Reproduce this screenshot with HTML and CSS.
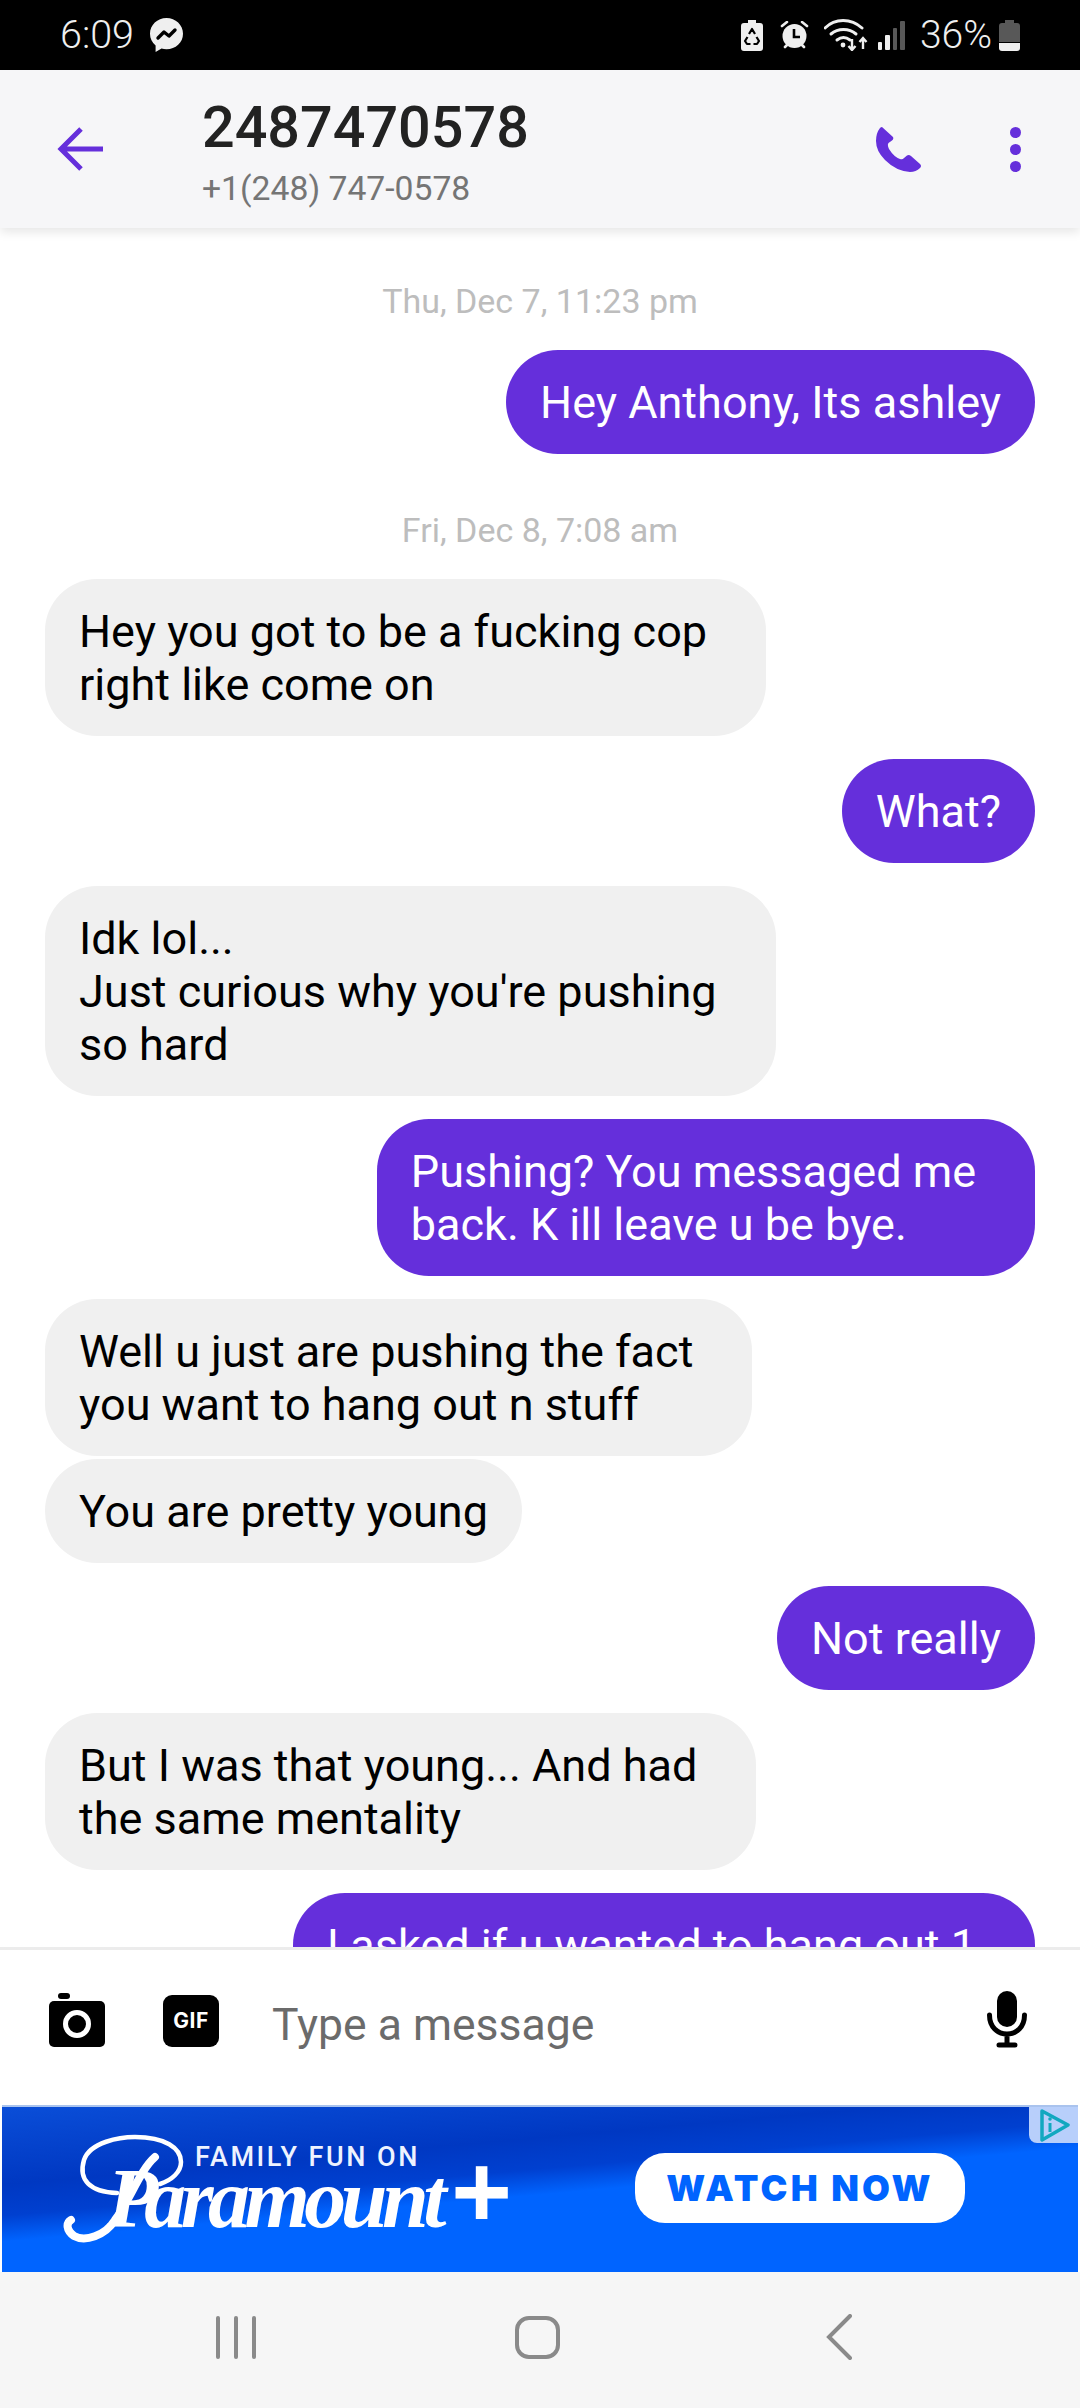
FILE: index.html
```html
<!DOCTYPE html>
<html lang="en">
<head>
<meta charset="utf-8">
<title>2487470578</title>
<link rel="stylesheet" href="styles.css">
</head>
<body>
<div class="phone">
  <div class="status">
    <div class="status-left">
      <span class="time">6:09</span>
      <svg class="ic-msgr" viewBox="0 0 33 34"><path fill="#efefef" d="M16.5 0C7.4 0 0 7 0 15.800c0 4.800 2.100 8.900 5.600 11.700V34l5.900-3.400c1.600.5 3.200.7 5 .7C25.600 31.300 33 24.600 33 15.800S25.600 0 16.500 0z"/><path fill="none" stroke="#000" stroke-width="3.400" stroke-linejoin="round" stroke-linecap="round" d="M8 20l6-6 5 4 6-6"/></svg>
    </div>
    <div class="status-right">
      <svg class="ic-rec" viewBox="0 0 22 31"><path fill="#efefef" d="M7 0h8v3h4a3 3 0 0 1 3 3v22a3 3 0 0 1-3 3H3a3 3 0 0 1-3-3V6a3 3 0 0 1 3-3h4z"/><path fill="none" stroke="#000" stroke-width="2.200" stroke-linejoin="round" d="M8 14l3-5 3 5M6.500 17l-2.500 4 2 3h3.500M15.500 17l2.500 4-2 3h-3.500"/></svg>
      <svg class="ic-alarm" viewBox="0 0 29 28"><circle cx="14.500" cy="15" r="12" fill="#efefef"/><path stroke="#efefef" stroke-width="2.600" stroke-linecap="round" fill="none" d="M2 5l5-4M27 5l-5-4M5 26l2-2M24 26l-2-2"/><path fill="none" stroke="#000" stroke-width="2.600" d="M14 8v8h6"/></svg>
      <svg class="ic-wifi" viewBox="0 0 44 32"><g fill="none" stroke="#efefef" stroke-width="3" stroke-linecap="round"><path d="M1 9c10-10 26-10 37 0"/><path d="M7 15c7-6 18-6 25 0"/><path d="M13 21c4-3 9-3 13 0"/></g><circle cx="19" cy="26" r="2.400" fill="#efefef"/><path fill="none" stroke="#efefef" stroke-width="2.400" d="M28 20v10M24.500 27l3.500 4 3.500-4M39 30V19M35.500 23l3.500-4 3.500 4"/></svg>
      <div class="signal"><i class="s1"></i><i class="s2"></i><i class="s3"></i><i class="s4"></i></div>
      <span class="pct">36%</span>
      <svg class="ic-batt" viewBox="0 0 21 31"><path fill="#585858" d="M6 0h9v3h3a3 3 0 0 1 3 3v16H0V6a3 3 0 0 1 3-3h3z"/><path fill="#efefef" d="M0 23h21v5a3 3 0 0 1-3 3H3a3 3 0 0 1-3-3z"/></svg>
    </div>
  </div>

  <header class="topbar">
    <svg class="ic-back" viewBox="0 0 46 44"><path fill="none" stroke="#652fdb" stroke-width="5" d="M46 22H5M24 2L4 22l20 20"/></svg>
    <div class="contact">
      <div class="contact-name">2487470578</div>
      <div class="contact-num">+1(248) 747-0578</div>
    </div>
    <svg class="ic-call" viewBox="0 0 45 45"><path fill="#652fdb" d="M6 0L17 10Q18 12 16 13.500L12.500 16Q11 18 13 22Q18 30 24 32Q26.500 33 28 31L31 28.500Q33 27.500 35 29L44 37Q46 39 44 41Q40 45 34 45Q20 44 9 33Q0 24 0 14Q0 6 4 1Q5 0 6 0Z"/></svg>
    <div class="more"><i></i><i></i><i></i></div>
  </header>

  <main class="thread">
    <div class="stamp stamp-first">Thu, Dec 7, 11:23 pm</div>
    <div class="bubble out">Hey Anthony, Its ashley</div>
    <div class="stamp">Fri, Dec 8, 7:08 am</div>
    <div class="bubble in multi">Hey you got to be a fucking cop<br>right like come on</div>
    <div class="bubble out">What?</div>
    <div class="bubble in multi">Idk lol...<br>Just curious why you're pushing<br>so hard</div>
    <div class="bubble out multi">Pushing? You messaged me<br>back. K ill leave u be bye.</div>
    <div class="bubble in multi">Well u just are pushing the fact<br>you want to hang out n stuff</div>
    <div class="bubble in tight">You are pretty young</div>
    <div class="bubble out">Not really</div>
    <div class="bubble in multi">But I was that young... And had<br>the same mentality</div>
    <div class="bubble out multi">I asked if u wanted to hang out 1<br>time</div>
  </main>

  <div class="composer">
    <svg class="ic-cam" viewBox="0 0 56 54"><rect x="9" y="0" width="12" height="6" rx="3" fill="#000"/><rect x="0" y="8" width="56" height="46" rx="5" fill="#000"/><circle cx="28" cy="31" r="11.500" fill="none" stroke="#fff" stroke-width="5"/></svg>
    <div class="gif">GIF</div>
    <div class="placeholder">Type a message</div>
    <svg class="ic-mic" viewBox="0 0 40 57"><rect x="10" y="0" width="20" height="36" rx="10" fill="#000"/><path fill="none" stroke="#000" stroke-width="5" stroke-linecap="round" d="M2.500 24c0 12 8 19 17.500 19s17.500-7 17.500-19M20 43v11M12 54h16"/></svg>
  </div>

  <div class="ad">
    <div class="ad-logo">
      <div class="ad-tag">FAMILY FUN ON</div>
      <div class="ad-brand"><span class="ad-p">P</span><span class="ad-word">aramount</span><span class="ad-plus">+</span></div>
      <svg class="ad-swash" viewBox="0 0 130 115"><g fill="none" stroke="#fff" stroke-linecap="round"><path stroke-width="4.500" d="M57 63C30 62 18 50 24 30 30 12 60 7 75 7c30 0 46 11 46 25 0 10-9 18-21 22"/><path stroke-width="8" d="M95 27C80 40 70 70 55 90 45 106 25 112 14 106 6 100 6 93 11 90"/></g></svg>
    </div>
    <div class="ad-cta">WATCH NOW</div>
    <div class="ad-choice"><svg viewBox="0 0 36 34"><path fill="none" stroke="#12a8c0" stroke-width="3.500" stroke-linejoin="round" d="M6 3l26 14L6 32z"/><path stroke="#12a8c0" stroke-width="3" d="M14 15v9"/><circle cx="14" cy="11" r="1.800" fill="#12a8c0"/></svg></div>
  </div>

  <nav class="navbar">
    <div class="nav-recent"><i></i><i></i><i></i></div>
    <div class="nav-home"></div>
    <svg class="nav-back" viewBox="0 0 26 46"><path fill="none" stroke="#8a8a8a" stroke-width="4" stroke-linecap="round" d="M24 2L3 23l21 21"/></svg>
  </nav>
</div>
</body>
</html>
```
FILE: styles.css
```css
* { box-sizing: border-box; }
html, body { margin: 0; padding: 0; }
body { background: #fff; font-family: Roboto, "Liberation Sans", sans-serif; }
.phone { width: 1080px; height: 2408px; display: flex; flex-direction: column; overflow: hidden; }

.status { flex: 0 0 70px; background: #000; color: #efefef; display: flex; justify-content: space-between; align-items: center; padding: 0 60px; }
.status-left, .status-right { display: flex; align-items: center; }
.time { font-size: 39.500px; line-height: 40px; font-weight: 300; }
.ic-msgr { width: 33px; height: 34px; margin-left: 16px; }
.ic-rec { width: 22px; height: 31px; }
.ic-alarm { width: 29px; height: 28px; margin-left: 17px; }
.ic-wifi { width: 44px; height: 32px; margin-left: 15px; }
.signal { display: flex; align-items: flex-end; gap: 3px; height: 29px; margin-left: 10px; }
.signal i { display: block; width: 4.500px; background: #585858; border-radius: 1px; }
.signal .s1 { height: 8px; background: #efefef; }
.signal .s2 { height: 15px; background: #efefef; }
.signal .s3 { height: 22px; }
.signal .s4 { height: 29px; }
.pct { font-size: 39px; line-height: 40px; font-weight: 300; margin-left: 15px; }
.ic-batt { width: 21px; height: 31px; margin-left: 7px; }

.topbar { flex: 0 0 158px; background: #f6f6f8; display: flex; align-items: center; padding: 0 0 0 57px; position: relative; z-index: 2; box-shadow: 0 4px 10px rgba(0,0,0,.1); }
.ic-back { width: 46px; height: 44px; }
.contact { margin-left: 99px; width: 674px; padding-top: 5px; }
.contact-name { font-size: 57.500px; line-height: 66px; font-weight: 500; color: #222; }
.contact-num { font-size: 33.700px; line-height: 40px; color: #757575; margin-top: 8px; }
.ic-call { width: 45px; height: 45px; }
.more { display: flex; flex-direction: column; gap: 6px; margin-left: 89px; }
.more i { display: block; width: 11px; height: 11px; border-radius: 50%; background: #652fdb; }

.thread { flex: 1 1 0; min-height: 0; overflow: hidden; display: flex; flex-direction: column; padding: 53px 45px 0; background: #fff; }
.stamp { align-self: center; font-size: 34px; line-height: 40px; color: #bdbdbd; margin: 56px 0 6px; flex: none; }
.stamp-first { margin-top: 0; }
.bubble { font-size: 45px; line-height: 53px; padding: 26px 34px 25px; border-radius: 52px; margin-top: 23px; flex: none; white-space: nowrap; }
.bubble.multi { padding-right: 59px; }
.bubble.in { align-self: flex-start; background: #f0f0f0; color: #000; }
.bubble.out { align-self: flex-end; background: #652fdb; color: #fff; }
.bubble.tight { margin-top: 3px; }

.composer { flex: 0 0 158px; background: #fff; border-top: 3px solid #ececec; display: flex; align-items: center; padding: 0 53px 16px 49px; }
.ic-cam { width: 56px; height: 54px; }
.gif { width: 56px; height: 52px; margin-left: 58px; margin-top: 2px; border-radius: 9px; background: #000; color: #fff; font-family: Inter, Roboto, sans-serif; font-size: 21px; letter-spacing: .5px; font-weight: 700; display: flex; align-items: center; justify-content: center; }
.placeholder { flex: 1; margin-left: 53px; margin-top: 10px; font-size: 44.500px; line-height: 52px; color: #6b6b6b; }
.ic-mic { width: 40px; height: 57px; }

.ad { flex: 0 0 167px; min-height: 0; margin-left: 2px; margin-right: 2px; border-top: 2px solid #a9c3ee; position: relative; display: flex; align-items: center; background: linear-gradient(175deg, #0a4ed8 0, #0038c2 30%, #0040d0 42%, #0064ff 52%, #0064ff 100%); }
.ad-logo { width: 633px; height: 100%; padding: 38px 0 0 193px; display: flex; flex-direction: column; position: relative; }
.ad-tag { font-size: 27px; line-height: 24px; font-weight: 500; letter-spacing: 2.500px; color: #eef3ff; flex: none; }
.ad-brand { display: flex; align-items: baseline; margin: -38px 0 0 -88px; color: #fff; font-family: "Liberation Serif", serif; font-style: italic; font-weight: 700; flex: none; }
.ad-p { font-size: 84px; line-height: 120px; font-weight: 700; }
.ad-word { font-size: 84px; line-height: 120px; letter-spacing: -5.500px; margin-left: -14px; }
.ad-plus { font-size: 104px; line-height: 120px; font-family: "Liberation Sans", sans-serif; margin-left: 8px; }
.ad-swash { position: absolute; left: 58px; top: 23px; width: 130px; height: 115px; }
.ad-cta { width: 330px; height: 70px; border-radius: 30px; background: #fff; color: #0064ff; font-family: Inter, Roboto, sans-serif; font-weight: 900; font-size: 36px; letter-spacing: 3.200px; display: flex; align-items: center; justify-content: center; margin-top: -4px; }
.ad-choice { position: absolute; top: 0; right: 0; width: 49px; height: 36px; background: #b8cffb; border-bottom-left-radius: 8px; display: flex; justify-content: center; align-items: center; }
.ad-choice svg { width: 36px; height: 34px; }

.navbar { flex: 0 0 136px; background: #f6f6f6; display: flex; align-items: center; padding: 0 0 6px 216px; }
.nav-recent { display: flex; gap: 14px; }
.nav-recent i { display: block; width: 4px; height: 43px; border-radius: 2px; background: #8a8a8a; }
.nav-home { width: 45px; height: 43px; border: 4px solid #8a8a8a; border-radius: 14px; margin-left: 259px; }
.nav-back { width: 26px; height: 46px; margin-left: 266px; }
```
